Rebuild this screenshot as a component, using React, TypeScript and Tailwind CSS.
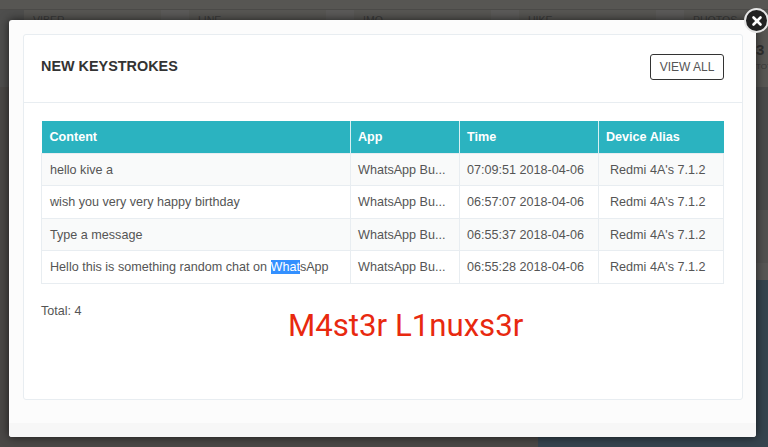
import React from "react";
import { X } from "lucide-react";

const rows = [
  { content: "hello kive a", time: "07:09:51 2018-04-06" },
  { content: "wish you very very happy birthday", time: "06:57:07 2018-04-06" },
  { content: "Type a message", time: "06:55:37 2018-04-06" },
  { content: "highlight", time: "06:55:28 2018-04-06" },
];

const tiles = ["VIBER", "LINE", "IMO", "HIKE", "PHOTOS"];

const App = () => {
  return (
    <div className="relative h-[447px] w-[768px] overflow-hidden bg-[#4a4846] font-['Liberation_Sans',Arial,sans-serif]">
      {/* page behind the modal */}
      <div className="h-[9px] bg-[#575653]" />
      <div className="ml-[-4px] flex h-[78px] border-t border-[#4c4b49] bg-[#575653]">
        {tiles.map((tile, index) => (
          <div key={tile} className="flex w-[165px] shrink-0">
            <div className={`h-full w-[28px] ${index === 0 ? "bg-[#4e4e4d]" : "bg-[#5b5a59]"}`} />
            <div className="pl-[9px] pt-[3px] text-[10.5px] text-[#3a3a3a]">
              {tile}
              {tile === "PHOTOS" && (
                <div className="ml-[63px] mt-[12px] w-[30px]">
                  <div className="text-[15px] font-bold leading-[18px] text-[#2f2f2f]">3</div>
                  <div className="mt-[2px] text-[8px] text-[#383838]">TOTAL</div>
                </div>
              )}
            </div>
          </div>
        ))}
      </div>
      <div className="flex justify-end">
        <div className="w-[12px]">
          <div className="h-[123px] bg-[#4a4a4a]" />
          <div className="h-[53px] bg-[#525150]" />
          <div className="h-[17px] bg-[#575655]" />
        </div>
      </div>
      <div className="ml-auto h-[167px] w-[230px] bg-[#36444e]" />

      {/* modal */}
      <div className="absolute left-[9px] top-[20px] h-[417px] w-[747px] rounded-[3px] bg-[#fcfcfc] pl-[14px] pr-[13px] pt-[14px] shadow-[0_0_10px_rgba(0,0,0,0.65)]">
        <div className="h-[366px] rounded-[3px] border border-[#e8edf1] bg-white">
          <div className="flex h-[68px] items-center justify-between border-b border-[#e8edf1] pb-[4px] pl-[17px] pr-[18px]">
            <h2 className="text-[14.4px] font-bold text-[#333333]">NEW KEYSTROKES</h2>
            <button className="h-[26px] w-[74px] rounded-[3px] border border-[#333333] bg-white text-[12px] text-[#555555]">
              VIEW ALL
            </button>
          </div>
          <div className="pl-[17px] pr-[17px] pt-[18px]">
            <table className="w-[683px] table-fixed border-collapse text-[12.6px] text-[#555555]">
              <thead>
                <tr className="h-[32px] bg-[#2bb3c0] text-left font-bold text-white">
                  <th className="w-[309px] border-r border-[#d8f0f3] pl-[8px] pt-[2px]">Content</th>
                  <th className="w-[109px] border-r border-[#d8f0f3] pl-[7px] pt-[2px]">App</th>
                  <th className="w-[139px] border-r border-[#d8f0f3] pl-[7px] pt-[2px]">Time</th>
                  <th className="pl-[7px] pt-[2px]">Device Alias</th>
                </tr>
              </thead>
              <tbody>
                {rows.map((row, index) => (
                  <tr key={row.time} className={`h-[32.5px] ${index % 2 === 0 ? "bg-[#f9fafa]" : "bg-white"}`}>
                    <td className="border border-[#e8edf1] pl-[8px] pt-[2px]">
                      {row.content === "highlight" ? (
                        <>
                          Hello this is something random chat on{" "}
                          <span className="bg-[#3390ff] text-white">What</span>sApp
                        </>
                      ) : (
                        row.content
                      )}
                    </td>
                    <td className="border border-[#e8edf1] pl-[7px] pt-[2px]">WhatsApp Bu...</td>
                    <td className="border border-[#e8edf1] pl-[7px] pt-[2px]">{row.time}</td>
                    <td className="border border-[#e8edf1] pl-[11px] pt-[2px]">Redmi 4A's 7.1.2</td>
                  </tr>
                ))}
              </tbody>
            </table>
            <div className="relative pt-[18px] text-[12.6px] text-[#555555]">
              Total: 4
              <span className="absolute left-[247px] top-[24px] font-['Roboto',sans-serif] text-[31.2px] leading-[36px] text-[#e8290f]">
                M4st3r L1nuxs3r
              </span>
            </div>
          </div>
        </div>
        <div className="absolute bottom-0 left-0 right-0 h-[14px] rounded-b-[3px] bg-[#f7f7f7]" />
      </div>

      {/* close button */}
      <div className="absolute left-[744px] top-[8px] flex h-[25px] w-[25px] items-center justify-center rounded-full border-2 border-[#e6e6e6] bg-[#222222]">
        <X size={14} strokeWidth={4.5} className="text-white" />
      </div>
    </div>
  );
};

export default App;
